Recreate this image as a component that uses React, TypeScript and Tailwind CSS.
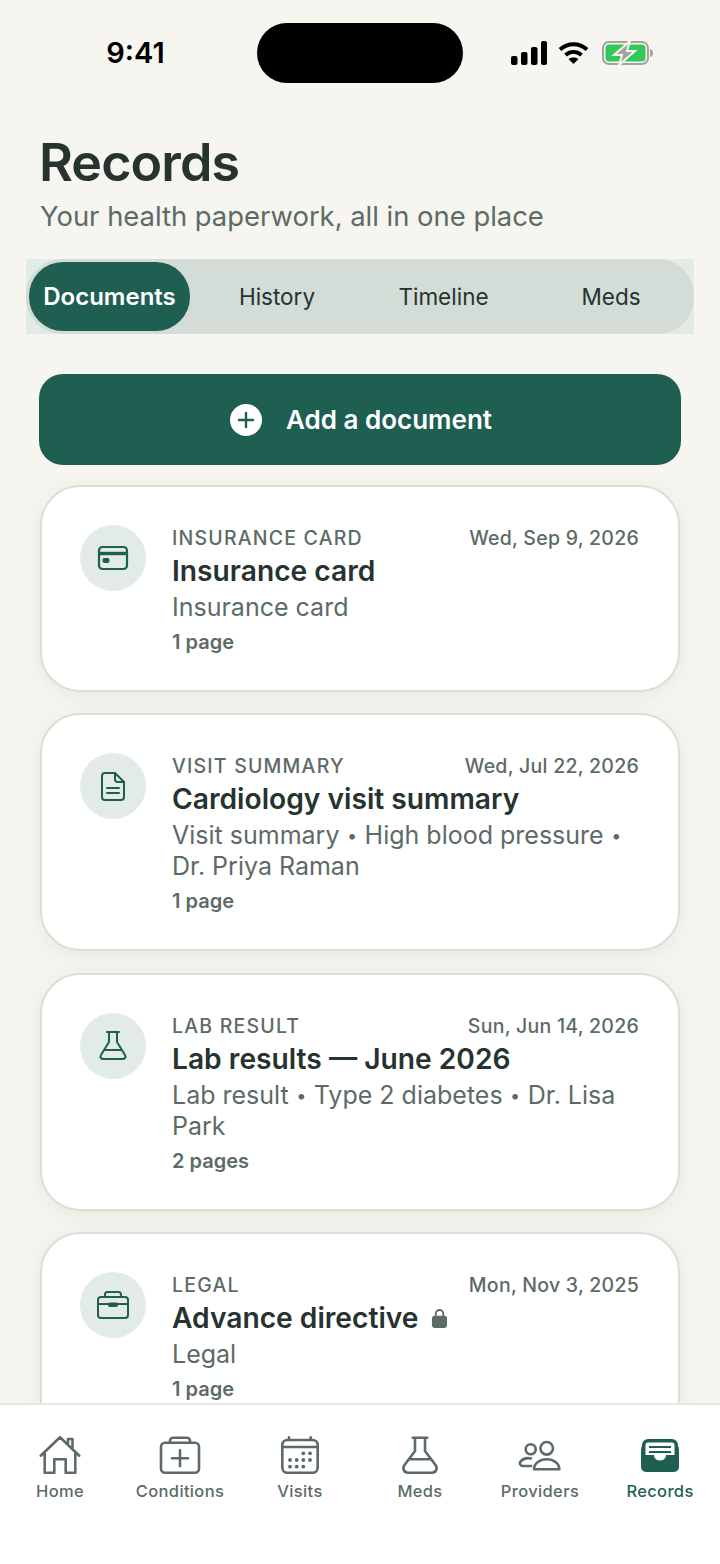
import React from "react";

const G = "#1f5f52";
const N = "#5c6b66";

function Card({ children }: { children: React.ReactNode }) {
  return (
    <svg width="34" height="34" viewBox="0 0 34 34" fill="none" stroke={G} strokeWidth="2" strokeLinecap="round" strokeLinejoin="round">
      {children}
    </svg>
  );
}

const CardIcon = () => (
  <Card>
    <rect x="3" y="6" width="28" height="22" rx="3.5" strokeWidth="2.2" />
    <path d="M3 12.5h28" strokeWidth="3.4" strokeLinecap="butt" />
    <rect x="7.5" y="18" width="5" height="3" rx="1" fill={G} />
  </Card>
);
const DocIcon = () => (
  <Card>
    <path d="M9 4h10l9 9v15a3 3 0 0 1-3 3H9a3 3 0 0 1-3-3V7a3 3 0 0 1 3-3Z" />
    <path d="M19 4v6a3 3 0 0 0 3 3h6" />
    <path d="M11 19h12M11 24h12" />
  </Card>
);
const FlaskIcon = () => (
  <Card>
    <path d="M11 3h12M13 3v10L5 26c-1.300 2.200.2 4 2.500 4h19c2.300 0 3.800-1.800 2.500-4L21 13V3" />
    <path d="M9 21h16" />
  </Card>
);
const CaseIcon = () => (
  <Card>
    <rect x="2" y="9" width="30" height="21" rx="3" />
    <path d="M9 9V6.500A2.500 2.500 0 0 1 11.500 4h11A2.500 2.500 0 0 1 25 6.500V9" />
    <path d="M2 16h30" />
    <rect x="13" y="15.500" width="8" height="2.500" rx="1" fill={G} />
  </Card>
);

function Dot() {
  return <span className="mx-[7.5px] text-[18px] align-[2px]">•</span>;
}

function Doc({
  icon,
  kind,
  date,
  title,
  lines,
  pages,
  lock,
}: {
  icon: React.ReactNode;
  kind: string;
  date: string;
  title: string;
  lines: React.ReactNode[];
  pages: string;
  lock?: boolean;
}) {
  return (
    <div className="flex shrink-0 gap-[26px] rounded-[40px] border-2 border-[#e2ddd2] bg-white pl-[38px] pr-[39px] pt-[38px] pb-[36px] shadow-[0_4px_20px_rgba(70,70,50,0.08)]">
      <div className="flex h-[66px] w-[66px] shrink-0 items-center justify-center rounded-full bg-[#e3ebe6]">{icon}</div>
      <div className="mt-[1px] min-w-0 flex-1">
        <div className="flex h-[24px] items-center justify-between text-[19.5px] leading-[24px]">
          <span className="font-medium tracking-[1.2px] text-[#5c6b66]">{kind}</span>
          <span className="font-medium tracking-[0.25px] text-[#5c6b66]">{date}</span>
        </div>
        <div className="mt-[3px] flex h-[36px] items-center gap-[13px] text-[28.200px] font-semibold leading-[36px] text-[#26332f]">
          {title}
          {lock && (
            <svg width="17" height="21" viewBox="0 0 18 22">
              <path d="M5 9V6a4 4 0 0 1 8 0v3" fill="none" stroke="#5c6b66" strokeWidth="2" />
              <rect x="1" y="8" width="16" height="13" rx="3" fill="#5c6b66" />
            </svg>
          )}
        </div>
        <div className="mt-[3px] text-[25px] leading-[31px] text-[#5c6b66]">
          {lines.map((l, i) => (
            <div key={i} className="whitespace-nowrap">{l}</div>
          ))}
        </div>
        <div className="mt-[7px] text-[20px] font-semibold leading-[24px] text-[#5c6b66]">{pages}</div>
      </div>
    </div>
  );
}

function Nav({ label, active, children }: { label: string; active?: boolean; children: React.ReactNode }) {
  return (
    <div className="flex flex-1 flex-col items-center">
      <svg width="44" height="44" viewBox="0 0 44 44" fill="none" stroke={N} strokeWidth="2.600" strokeLinecap="round" strokeLinejoin="round">
        {children}
      </svg>
      <span className={`mt-[3px] text-[16.500px] font-medium leading-[22px] tracking-[0.35px] ${active ? "text-[#1f5f52]" : "text-[#5c6b66]"}`}>{label}</span>
    </div>
  );
}

export default function App() {
  return (
    <div className="flex h-[1564px] w-[720px] flex-col overflow-hidden bg-[#f6f5f0] font-['Inter',sans-serif]">
      <div className="min-h-0 flex-1 overflow-hidden px-[40px]">
        <div className="-mx-[40px] flex pt-[23px]">
          <div className="flex w-[257px] items-center justify-center pl-[14px] text-[29px] font-semibold text-black">9:41</div>
          <div className="h-[60px] w-[206px] rounded-[30px] bg-black" />
          <div className="flex flex-1 items-center justify-start pl-[48px]">
            <svg width="36" height="24" viewBox="0 0 36 24">
              <rect x="0" y="15" width="6.500" height="9" rx="2" />
              <rect x="10" y="11" width="6.500" height="13" rx="2" />
              <rect x="20" y="6" width="6.500" height="18" rx="2" />
              <rect x="30" y="0" width="6" height="24" rx="2" />
            </svg>
            <svg className="ml-[11px]" width="31" height="24" viewBox="0 0 31 24" fill="none" stroke="#000" strokeWidth="4">
              <path d="M2 8.500c8-7 19-7 27 0" />
              <path d="M7.500 14c5-4 11-4 16 0" />
              <path d="M15.500 23l-5-5c3-2 7-2 10 0Z" fill="#000" stroke="none" />
            </svg>
            <svg className="ml-[13px]" width="52" height="24" viewBox="0 0 52 24">
              <rect x="1" y="1" width="45" height="22" rx="6" fill="none" stroke="#a3a3a0" strokeWidth="2" />
              <rect x="3.500" y="3.500" width="40" height="17" rx="4" fill="#34c759" />
              <path d="M48 8c2 .4 3 2 3 4s-1 3.600-3 4Z" fill="#a3a3a0" />
              <path d="M28 0 12 14h8l-3 10 16-14h-8Z" fill="#a3a3a0" stroke="#f6f5f0" strokeWidth="2" />
            </svg>
          </div>
        </div>

        <div className="-ml-[1px] mt-[50px] text-[52px] font-semibold leading-[60px] tracking-[-0.9px] text-[#26332f]">Records</div>
        <div className="mt-[5px] text-[27.400px] leading-[36px] text-[#5c6b66]">Your health paperwork, all in one place</div>

        <div className="-mx-[14px] mt-[25px] h-[75px] bg-[#e3ebe6]">
          <div className="flex h-full items-center rounded-[36px] bg-[#d4dcd7] p-[3px] text-[22.500px] text-[#26332f]">
            <div className="flex h-[69px] w-[161px] items-center justify-center rounded-[34px] bg-[#1f5f52] text-[24px] font-semibold text-white">Documents</div>
            <div className="w-[174px] text-center">History</div>
            <div className="w-[159px] text-center">Timeline</div>
            <div className="flex-1 pl-[8px] text-center">Meds</div>
          </div>
        </div>

        <div className="-mx-[1px] mt-[40px] flex h-[91px] items-center justify-center gap-[24px] rounded-[24px] bg-[#1f5f52] pl-[2px] text-[26px] font-semibold text-white">
          <svg width="32" height="32" viewBox="0 0 32 32">
            <circle cx="16" cy="16" r="16" fill="#fff" />
            <path d="M16 9v14M9 16h14" stroke="#1f5f52" strokeWidth="2.400" strokeLinecap="round" />
          </svg>
          Add a document
        </div>

        <div className="mt-[20px] flex flex-col gap-[21.400px]">
          <Doc icon={<CardIcon />} kind="INSURANCE CARD" date="Wed, Sep 9, 2026" title="Insurance card" lines={["Insurance card"]} pages="1 page" />
          <Doc icon={<DocIcon />} kind="VISIT SUMMARY" date="Wed, Jul 22, 2026" title="Cardiology visit summary" lines={[<>Visit summary<Dot />High blood pressure<Dot /></>, "Dr. Priya Raman"]} pages="1 page" />
          <Doc icon={<FlaskIcon />} kind="LAB RESULT" date="Sun, Jun 14, 2026" title="Lab results — June 2026" lines={[<>Lab result<Dot />Type 2 diabetes<Dot />Dr. Lisa</>, "Park"]} pages="2 pages" />
          <Doc icon={<CaseIcon />} kind="LEGAL" date="Mon, Nov 3, 2025" title="Advance directive" lines={["Legal"]} pages="1 page" lock />
        </div>
      </div>

      <div className="flex h-[161px] shrink-0 border-t-2 border-[#e9e7e1] bg-white pt-[28px]">
        <Nav label="Home">
          <path d="M2.700 22.700 22 4.300l19.300 18.400M6.700 19v20.700h9.600V26.300h11.400v13.400h9.600V19M30 10.500V6h4.500v9" />
        </Nav>
        <Nav label="Conditions">
          <rect x="3" y="9.700" width="38" height="30" rx="4" />
          <path d="M12 9.700V7.700a3 3 0 0 1 3-3h14a3 3 0 0 1 3 3v2M22 17.300v16M14 25.300h16" />
        </Nav>
        <Nav label="Visits">
          <rect x="4.300" y="7" width="35.400" height="32.700" rx="5" />
          <path d="M4.300 14h35.400M11 4.300V7M32.700 4.300V7" />
          <g fill={N} stroke="none">
            {[[25.300, 20.300], [32, 20.300], [12, 27], [18.700, 27], [25.300, 27], [32, 27], [12, 33.700], [18.700, 33.700], [25.300, 33.700]].map(([x, y]) => (
              <circle key={`${x}-${y}`} cx={x} cy={y} r="1.900" />
            ))}
          </g>
        </Nav>
        <Nav label="Meds">
          <path d="M14.700 4.700h14.600M17 4.700V18L6.500 32c-2.500 3.500-.5 7.700 3.500 7.700h24c4 0 6-4.200 3.500-7.700L27 18V4.700M11.300 26.300h21.400" />
        </Nav>
        <Nav label="Providers">
          <circle cx="12.700" cy="16.300" r="5" />
          <circle cx="28.700" cy="15.300" r="6.300" />
          <path d="M13 33H5c-3 0-4-3-2-5 2.500-2.500 6-3.500 10-2.500" />
          <path d="M16 36.300c0-6 6-10 12.700-10s12.600 4 12.600 10Z" />
        </Nav>
        <Nav label="Records" active>
          <path d="M10 6h24a6 6 0 0 1 6 6l1 4v18a5 5 0 0 1-5 5H8a5 5 0 0 1-5-5V16l1-4a6 6 0 0 1 6-6Z" fill={G} stroke="none" />
          <path d="M7.500 12c0-1.500 1-2.500 2.500-2.500h24c1.500 0 2.500 1 2.500 2.500v10H28c0 3.300-2.700 5.500-6 5.500s-6-2.200-6-5.500H7.500Z" fill="#fff" stroke="none" />
          <path d="M11 14h22M11 19h22" stroke={G} strokeWidth="2.200" strokeLinecap="butt" />
        </Nav>
      </div>
    </div>
  );
}
